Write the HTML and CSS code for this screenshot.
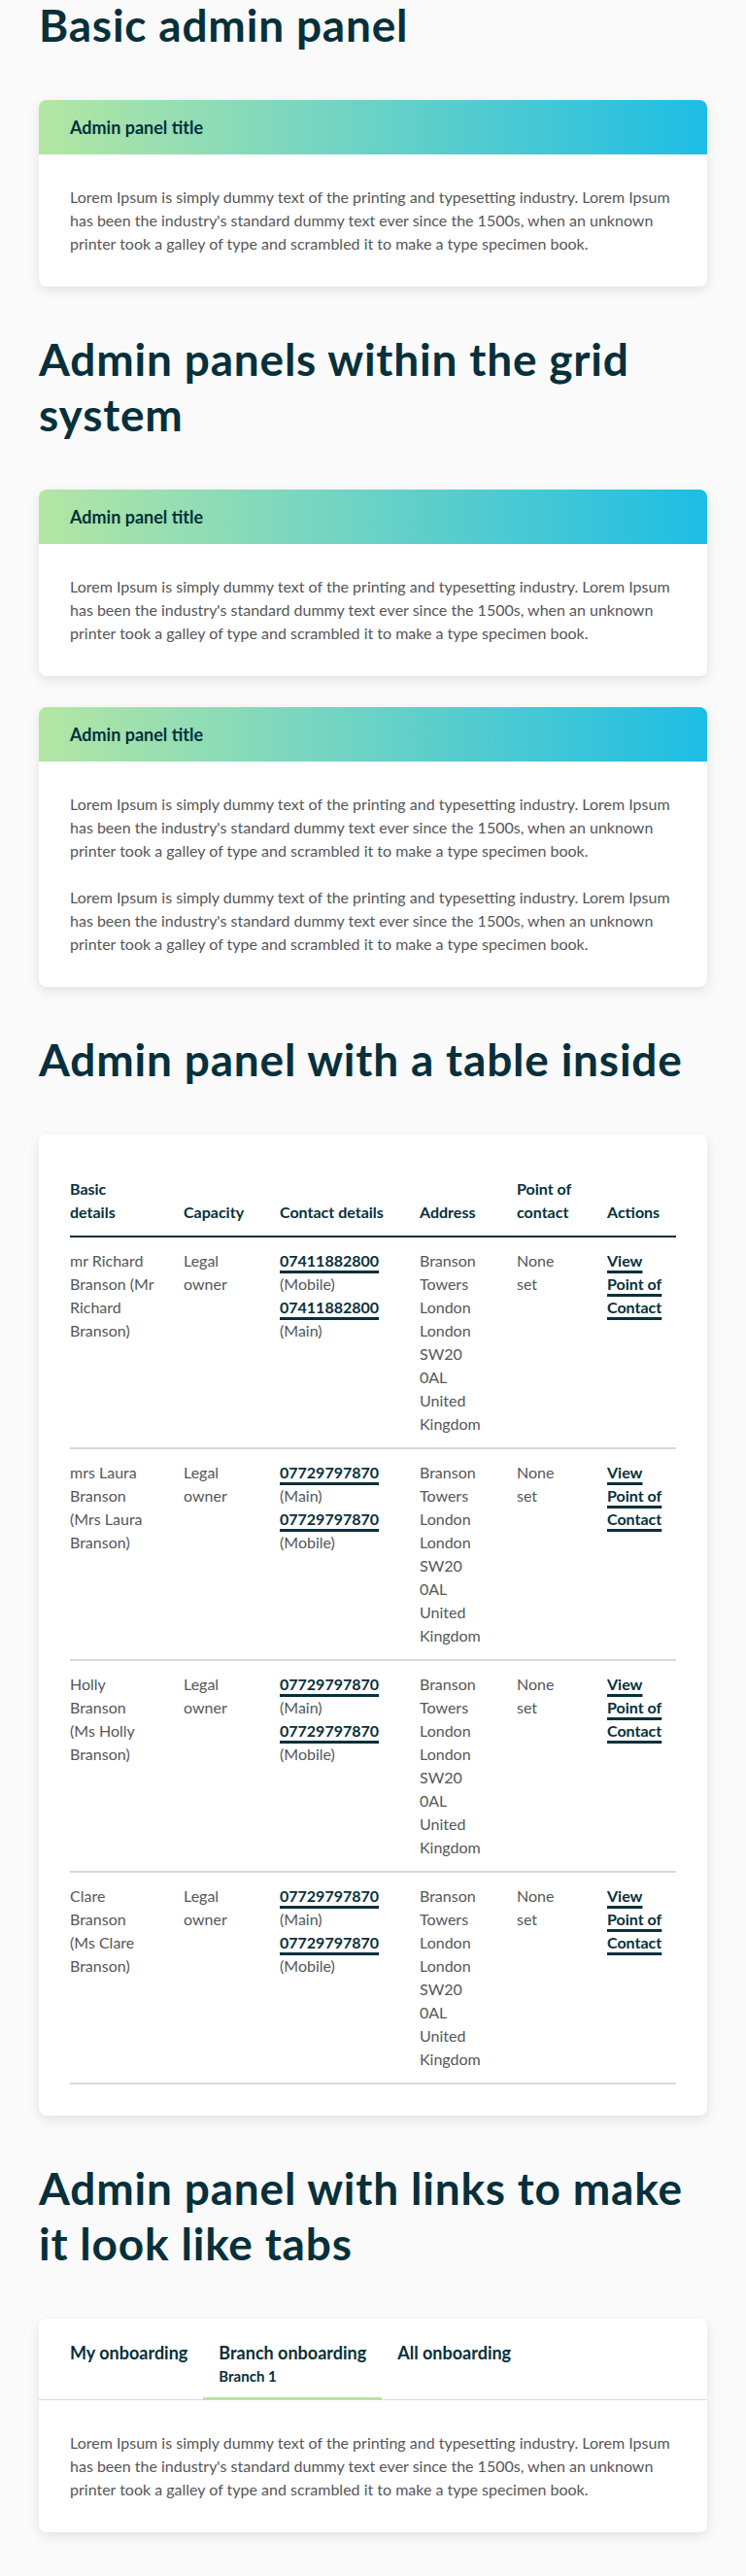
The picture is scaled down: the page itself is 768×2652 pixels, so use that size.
FILE: index.html
```html
<!DOCTYPE html>
<html lang="en">
<head>
<meta charset="utf-8">
<title>Admin panels</title>
<link rel="stylesheet" href="styles.css">
</head>
<body>
<main class="page">

  <h1 class="section-title first">Basic admin panel</h1>
  <section class="panel">
    <header class="panel-head"><h2 class="panel-title">Admin panel title</h2></header>
    <div class="panel-body">
      <p>Lorem Ipsum is simply dummy text of the printing and typesetting industry. Lorem Ipsum has been the industry's standard dummy text ever since the 1500s, when an unknown printer took a galley of type and scrambled it to make a type specimen book.</p>
    </div>
  </section>

  <h1 class="section-title">Admin panels within the grid system</h1>
  <div class="grid">
    <section class="panel">
      <header class="panel-head"><h2 class="panel-title">Admin panel title</h2></header>
      <div class="panel-body">
        <p>Lorem Ipsum is simply dummy text of the printing and typesetting industry. Lorem Ipsum has been the industry's standard dummy text ever since the 1500s, when an unknown printer took a galley of type and scrambled it to make a type specimen book.</p>
      </div>
    </section>
    <section class="panel">
      <header class="panel-head"><h2 class="panel-title">Admin panel title</h2></header>
      <div class="panel-body">
        <p>Lorem Ipsum is simply dummy text of the printing and typesetting industry. Lorem Ipsum has been the industry's standard dummy text ever since the 1500s, when an unknown printer took a galley of type and scrambled it to make a type specimen book.</p>
        <p>Lorem Ipsum is simply dummy text of the printing and typesetting industry. Lorem Ipsum has been the industry's standard dummy text ever since the 1500s, when an unknown printer took a galley of type and scrambled it to make a type specimen book.</p>
      </div>
    </section>
  </div>

  <h1 class="section-title">Admin panel with a table inside</h1>
  <section class="panel">
    <div class="panel-body">
      <table class="data-table">
        <colgroup>
          <col class="c-basic"><col class="c-capacity"><col class="c-contact"><col class="c-address"><col class="c-poc"><col class="c-actions">
        </colgroup>
        <thead>
          <tr>
            <th>Basic<br>details</th>
            <th>Capacity</th>
            <th>Contact details</th>
            <th>Address</th>
            <th>Point of<br>contact</th>
            <th>Actions</th>
          </tr>
        </thead>
        <tbody>
          <tr>
            <td>mr Richard<br>Branson (Mr<br>Richard<br>Branson)</td>
            <td>Legal<br>owner</td>
            <td><a class="link" href="#">07411882800</a><span class="note">(Mobile)</span><a class="link" href="#">07411882800</a><span class="note">(Main)</span></td>
            <td>Branson<br>Towers<br>London<br>London<br>SW20<br>0AL<br>United<br>Kingdom</td>
            <td>None<br>set</td>
            <td><a class="link" href="#">View<br>Point of<br>Contact</a></td>
          </tr>
          <tr>
            <td>mrs Laura<br>Branson<br>(Mrs Laura<br>Branson)</td>
            <td>Legal<br>owner</td>
            <td><a class="link" href="#">07729797870</a><span class="note">(Main)</span><a class="link" href="#">07729797870</a><span class="note">(Mobile)</span></td>
            <td>Branson<br>Towers<br>London<br>London<br>SW20<br>0AL<br>United<br>Kingdom</td>
            <td>None<br>set</td>
            <td><a class="link" href="#">View<br>Point of<br>Contact</a></td>
          </tr>
          <tr>
            <td>Holly<br>Branson<br>(Ms Holly<br>Branson)</td>
            <td>Legal<br>owner</td>
            <td><a class="link" href="#">07729797870</a><span class="note">(Main)</span><a class="link" href="#">07729797870</a><span class="note">(Mobile)</span></td>
            <td>Branson<br>Towers<br>London<br>London<br>SW20<br>0AL<br>United<br>Kingdom</td>
            <td>None<br>set</td>
            <td><a class="link" href="#">View<br>Point of<br>Contact</a></td>
          </tr>
          <tr>
            <td>Clare<br>Branson<br>(Ms Clare<br>Branson)</td>
            <td>Legal<br>owner</td>
            <td><a class="link" href="#">07729797870</a><span class="note">(Main)</span><a class="link" href="#">07729797870</a><span class="note">(Mobile)</span></td>
            <td>Branson<br>Towers<br>London<br>London<br>SW20<br>0AL<br>United<br>Kingdom</td>
            <td>None<br>set</td>
            <td><a class="link" href="#">View<br>Point of<br>Contact</a></td>
          </tr>
        </tbody>
      </table>
    </div>
  </section>

  <h1 class="section-title">Admin panel with links to make it look like tabs</h1>
  <section class="panel">
    <nav class="tabs">
      <a class="tab" href="#">My onboarding</a>
      <a class="tab active" href="#">Branch onboarding<span class="tab-sub">Branch 1</span></a>
      <a class="tab" href="#">All onboarding</a>
    </nav>
    <div class="panel-body">
      <p>Lorem Ipsum is simply dummy text of the printing and typesetting industry. Lorem Ipsum has been the industry's standard dummy text ever since the 1500s, when an unknown printer took a galley of type and scrambled it to make a type specimen book.</p>
    </div>
  </section>

</main>
</body>
</html>
```

FILE: styles.css
```css
* { box-sizing: border-box; }

body {
  margin: 0;
  background: #fafafa;
  font-family: Lato, "Open Sans", Arial, sans-serif;
  color: #555759;
}

.page {
  padding: 0 40px 44px;
}

.section-title {
  margin: 46px 0 49px;
  font-size: 46px;
  line-height: 57px;
  font-weight: 700;
  color: #06303b;
  letter-spacing: 0.8px;
}

.section-title.first {
  margin-top: -3px;
}

.grid {
  display: flex;
  flex-direction: column;
  gap: 32px;
}

.panel {
  background: #fff;
  border-radius: 8px;
  box-shadow: 0 4px 12px rgba(0, 0, 0, 0.1);
  overflow: hidden;
}

.panel-head {
  height: 56px;
  display: flex;
  align-items: center;
  padding: 0 32px;
  background: linear-gradient(90deg, #b4e6a3 0%, #79d6c0 40%, #1dbde5 100%);
}

.panel-title {
  margin: 0;
  font-size: 18px;
  line-height: 24px;
  font-weight: 700;
  color: #06303b;
}

.panel-body {
  padding: 32px;
}

.panel-body p {
  margin: 0 0 24px;
  font-size: 16px;
  line-height: 24px;
  color: #555759;
}

.panel-body p:last-child {
  margin-bottom: 0;
}

/* table */
.data-table {
  width: 100%;
  table-layout: fixed;
  border-collapse: collapse;
  font-size: 16px;
  line-height: 24px;
}

.c-basic { width: 117px; }
.c-capacity { width: 99px; }
.c-contact { width: 144px; }
.c-address { width: 100px; }
.c-poc { width: 93px; }
.c-actions { width: 71px; }

.data-table th {
  text-align: left;
  vertical-align: bottom;
  padding: 12px 0;
  font-size: 16px;
  font-weight: 700;
  color: #06303b;
  border-bottom: 2px solid #06303b;
}

.data-table td {
  vertical-align: top;
  padding: 12px 0;
  color: #555759;
  border-bottom: 2px solid #d9d9d9;
}

.link {
  font-weight: 700;
  color: #06303b;
  text-decoration: underline;
  text-decoration-thickness: 3px;
  text-underline-offset: 4px;
}

.data-table td .link {
  display: inline-block;
}

.note {
  display: block;
}

/* tabs */
.tabs {
  display: flex;
  align-items: flex-start;
  padding: 23px 16px 0;
  border-bottom: 1px solid #dcdcdc;
}

.tab {
  display: flex;
  flex-direction: column;
  padding: 0 16px 10px;
  margin-bottom: -1px;
  font-size: 18px;
  line-height: 24px;
  font-weight: 700;
  color: #06303b;
  text-decoration: none;
  border-bottom: 3px solid transparent;
}

.tab.active {
  border-bottom-color: #b5e4a4;
}

.tab-sub {
  font-size: 15px;
  line-height: 24px;
}
```
